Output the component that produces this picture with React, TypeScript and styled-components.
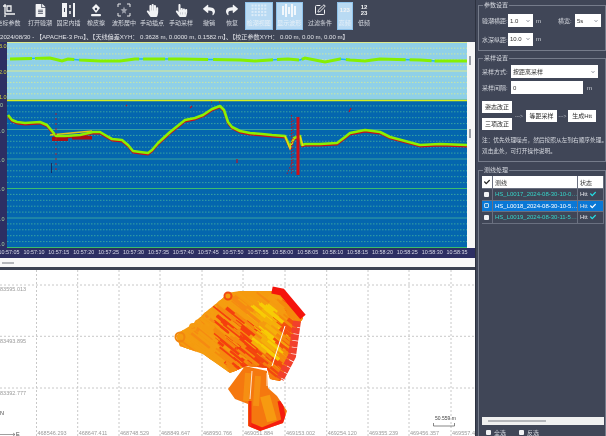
import React from "react";
import styled, { createGlobalStyle } from "styled-components";
import { FaFileAlt, FaHandPaper, FaHandPointer, FaReply, FaShare, FaCheck, FaChevronDown } from "react-icons/fa";
import { SquarePen } from "lucide-react";

const GlobalStyle = createGlobalStyle`
  html, body {
    margin: 0;
    padding: 0;
    width: 606px;
    height: 436px;
    overflow: hidden;
    background: #404657;
    font-family: "Liberation Sans", "Noto Sans CJK SC", sans-serif;
    font-size: 6px;
    color: #d5d8df;
  }
`;

// the reference is a scaled-down capture, everything in it is slightly soft
const Page = styled.div`
  display: flex;
  width: 606px;
  height: 436px;
  overflow: hidden;
  filter: blur(0.3px);
`;

const LeftColumn = styled.div`
  width: 476px;
  flex: none;
  display: flex;
  flex-direction: column;
  overflow: hidden;
  border-right: 1px solid #2d3240;
  box-sizing: border-box;
`;

const Toolbar = styled.div`
  height: 31px;
  flex: none;
  display: flex;
  padding-top: 2px;
  box-sizing: border-box;
`;

const Tool = styled.div<{ $w: number; $gap: number; $active?: boolean }>`
  width: ${(p) => p.$w}px;
  margin-left: ${(p) => p.$gap}px;
  height: 28px;
  flex: none;
  display: flex;
  flex-direction: column;
  align-items: center;
  box-sizing: border-box;
  gap: 2.5px;
  white-space: nowrap;
  line-height: 7px;
  background: ${(p) => (p.$active ? "#b9daf3" : "transparent")};
  border: 1px solid ${(p) => (p.$active ? "#8fc3ec" : "transparent")};
  color: ${(p) => (p.$active ? "#e6f0f8" : "#d5d8df")};
`;

const IconSlot = styled.div`
  height: 14px;
  display: flex;
  align-items: center;
  justify-content: center;
  color: #f2f3f5;
`;

const StackedDigits = styled.div`
  font-size: 6px;
  line-height: 6px;
  text-align: center;
  font-weight: 700;
`;

const InfoBar = styled.div`
  height: 11px;
  flex: none;
  line-height: 11px;
  font-size: 6.1px;
  white-space: nowrap;
  color: #dfe1e6;
`;

const ChartRow = styled.div`
  display: flex;
  height: 206px;
  flex: none;
`;

const PlotSvg = styled.svg`
  display: block;
  width: 467px;
  height: 206px;
  flex: none;
`;

const VScroll = styled.div`
  position: relative;
  flex: 1;
  background: #f7f7f7;
`;

const VThumb = styled.div<{ $top: number }>`
  position: absolute;
  left: 2px;
  top: ${(p) => p.$top}px;
  width: 2px;
  height: 9px;
  background: #9a9ea6;
`;

const TimeAxis = styled.div`
  height: 10px;
  flex: none;
  display: flex;
  background: #2d2f63;
  overflow: hidden;
`;

const TimeLabel = styled.span`
  width: 24.9px;
  flex: none;
  line-height: 9px;
  font-size: 5.4px;
  color: #d9dbe8;
  white-space: nowrap;
  display: flex;
  justify-content: center;
  &:first-child {
    margin-left: -3.4px;
  }
`;

const HScroll = styled.div`
  height: 9px;
  flex: none;
  display: flex;
  align-items: center;
  padding-left: 2px;
  background: #f8f8f8;
`;

const HThumb = styled.div<{ $w: number }>`
  width: ${(p) => p.$w}px;
  height: 2px;
  background: #b4b6ba;
`;

const Divider = styled.div`
  height: 3px;
  flex: none;
  background: #3c4252;
`;

const MapSvg = styled.svg`
  display: block;
  width: 476px;
  height: 167px;
  flex: none;
  background: #ffffff;
`;

const RightPanel = styled.div`
  flex: 1;
  display: flex;
  flex-direction: column;
  padding: 1px 0 0 2px;
  min-width: 0;
`;

const Group = styled.fieldset<{ $h: number; $gap?: number; $pad?: number }>`
  margin: ${(p) => p.$gap ?? 0}px 0 0;
  padding: ${(p) => p.$pad ?? 2}px 1px 0 3px;
  height: ${(p) => p.$h}px;
  flex: none;
  box-sizing: border-box;
  border: 1px solid #767c8b;
  min-width: 0;
  legend {
    padding: 0 1px;
    margin-left: 1px;
    font-size: 6px;
    line-height: 8px;
  }
`;

const FormRow = styled.div<{ $mt?: number }>`
  display: flex;
  align-items: center;
  margin-top: ${(p) => p.$mt ?? 0}px;
  white-space: nowrap;
`;

const FieldLabel = styled.span<{ $w?: number; $ml?: number }>`
  width: ${(p) => (p.$w ? `${p.$w}px` : "auto")};
  margin-left: ${(p) => p.$ml ?? 0}px;
  flex: none;
`;

const SelectBox = styled.div<{ $w: number; $h: number }>`
  width: ${(p) => p.$w}px;
  height: ${(p) => p.$h}px;
  flex: none;
  box-sizing: border-box;
  background: #ffffff;
  color: #333;
  display: flex;
  align-items: center;
  justify-content: space-between;
  padding: 0 3px 0 2px;
  svg {
    color: #8a8f9a;
  }
`;

const ActionRow = styled.div`
  display: flex;
  align-items: center;
  margin-top: 7px;
`;

const ButtonStack = styled.div`
  display: flex;
  flex-direction: column;
  gap: 5px;
`;

const ActionButton = styled.div<{ $w: number }>`
  width: ${(p) => p.$w}px;
  height: 12px;
  box-sizing: border-box;
  flex: none;
  background: #ffffff;
  color: #2b2b2b;
  text-align: center;
  line-height: 12px;
  font-size: 6px;
`;

const Arrow = styled.span<{ $w: number }>`
  width: ${(p) => p.$w}px;
  flex: none;
  text-align: center;
  font-size: 5px;
  color: #b6bac4;
`;

const Note = styled.div`
  margin-top: 5px;
  line-height: 11px;
  font-size: 5.7px;
  white-space: nowrap;
`;

const LineBody = styled.div`
  height: 263px;
  display: flex;
  flex-direction: column;
`;

const LineTable = styled.div`
  display: flex;
  flex-direction: column;
`;

const TableRow = styled.div<{ $variant?: "head" | "selected" }>`
  display: grid;
  grid-template-columns: 11px 85px 1fr;
  height: ${(p) => (p.$variant === "head" ? 13 : 11.5)}px;
  align-items: center;
  background: ${(p) =>
    p.$variant === "head" ? "#ffffff" : p.$variant === "selected" ? "#0a78d6" : "transparent"};
  color: ${(p) => (p.$variant === "head" ? "#333" : "#e4e6ea")};
  border-bottom: 1px solid #6a7080;
  box-sizing: border-box;
  & > * {
    height: 100%;
    display: flex;
    align-items: center;
    box-sizing: border-box;
    border-right: 1px solid #6a7080;
    padding-left: 2px;
    white-space: nowrap;
    overflow: hidden;
  }
`;

const LineName = styled.div<{ $selected?: boolean }>`
  color: ${(p) => (p.$selected ? "#ffffff" : "#35d4c8")};
  font-size: 6px;
`;

const StatusCell = styled.div<{ $selected?: boolean }>`
  gap: 2px;
  svg {
    color: ${(p) => (p.$selected ? "#ffffff" : "#24e0e6")};
  }
`;

const Box = styled.span<{ $tick?: boolean }>`
  width: 5px;
  height: 5px;
  flex: none;
  background: ${(p) => (p.$tick ? "#1a7fd0" : "#f2f3f5")};
  border: ${(p) => (p.$tick ? "1px solid #bcd9f0" : "none")};
  box-sizing: border-box;
  border-radius: 1px;
`;

const TableSpace = styled.div`
  flex: 1;
`;

const PanelScroll = styled.div`
  height: 8px;
  flex: none;
  display: flex;
  align-items: center;
  padding-left: 6px;
  background: #f0f0f0;
`;

const FooterRow = styled.div`
  height: 14px;
  flex: none;
  display: flex;
  align-items: center;
  gap: 13px;
  padding-left: 4px;
`;

const CheckLabel = styled.label`
  display: flex;
  align-items: center;
  gap: 3px;
`;

const CoordIcon = () => (
  <svg width="14" height="14" viewBox="0 0 14 14" fill="none" stroke="#f2f3f5" strokeWidth="1.3">
    <path d="M3 1v10h10M5 3h4v5H5zM1 3h3M3 12v2" />
  </svg>
);

const ColumnsIcon = () => (
  <svg width="13" height="14" viewBox="0 0 13 14">
    <rect x="0" y="0" width="5" height="14" fill="#f2f3f5" />
    <rect x="11" y="0" width="2" height="14" fill="#f2f3f5" />
    <path d="M8 2v3M8 8v3" stroke="#f2f3f5" strokeWidth="1.5" />
    <path d="M2 5h1v4H2z" fill="#404657" />
  </svg>
);

const InkIcon = () => (
  <svg width="14" height="14" viewBox="0 0 14 14" fill="#f2f3f5">
    <path d="M7 1l4 4-4 5-4-5z" />
    <rect x="2" y="11" width="10" height="2.2" rx="1" />
    <circle cx="7" cy="6" r="1.2" fill="#404657" />
  </svg>
);

const CenterIcon = () => (
  <svg width="14" height="14" viewBox="0 0 14 14" fill="none" stroke="#e8e9ec" strokeWidth="1">
    <path d="M1 4V1h3M10 1h3v3M13 10v3h-3M4 13H1v-3" />
    <path d="M7 3.5l1 2.5 2.5.5-2 1.7.6 2.6L7 9.5l-2.1 1.3.6-2.6-2-1.7 2.5-.5z" fill="#9da1ac" stroke="none" />
  </svg>
);

const GridDotsIcon = () => (
  <svg width="16" height="13" viewBox="0 0 16 13" fill="#dcecf8">
    {[0, 1, 2, 3].map((r) =>
      [0, 1, 2, 3, 4].map((c) => <rect key={`${r}-${c}`} x={c * 3.2 + 0.5} y={r * 3.2 + 0.5} width="2" height="2" />)
    )}
  </svg>
);

const WaveIcon = () => (
  <svg width="16" height="13" viewBox="0 0 16 13" fill="#f2f7fc">
    <rect x="1" y="2" width="2" height="9" />
    <rect x="4" y="0" width="2" height="13" />
    <rect x="7" y="3" width="2" height="7" />
    <rect x="10" y="0" width="2" height="13" />
    <rect x="13" y="2" width="2" height="9" />
  </svg>
);

const times = [
  "10:57:05", "10:57:10", "10:57:15", "10:57:20", "10:57:25", "10:57:30", "10:57:35",
  "10:57:40", "10:57:45", "10:57:50", "10:57:55", "10:58:00", "10:58:05", "10:58:10",
  "10:58:15", "10:58:20", "10:58:25", "10:58:30", "10:58:35",
];

const lowerCurve =
  "M8 115L12 120L17 122L25 123L40 122L47 125L52 131L56 136L65 136L80 135L93 132L100 132L105 135L112 139L122 140L128 145L133 151L140 152L148 153L152 150L158 143L170 132L185 120L195 118L203 115L212 109L220 106L224 110L228 122L232 127L240 131L250 133L262 134L272 135L285 136L290 147L294 138L300 136L302 145L305 144L320 144L337 143L345 137L350 133L365 130L380 132L390 137L405 141L420 145L440 144L467 145";
const upperCurve =
  "M10 59L50 58L62 61L68 59L80 60L100 61L120 61L135 59L150 59L180 59L240 60L255 61L270 60L288 59L300 60L305 58L315 60L325 62L340 59L350 60L365 61L380 59L420 60L435 61L467 61";

const rows = (from: number, to: number, step: number) => {
  const out: number[] = [];
  for (let y = from; y < to - 1; y += step) out.push(y);
  return out;
};

const Plot = () => (
  <PlotSvg viewBox="0 42 467 206">
    <rect x="7" y="42" width="460" height="58" fill="#8fd0e8" />
    <rect x="7" y="100" width="460" height="148" fill="#0466ae" />
    <rect x="0" y="42" width="7" height="206" fill="#2d2f63" />
    {rows(42.5, 100, 5.7).map((y, i) => (
      <line
        key={y}
        x1="7"
        x2="467"
        y1={y}
        y2={y}
        stroke={i % 5 === 0 ? "#dbe98e" : "#c9e6a4"}
        strokeDasharray={i % 5 === 0 ? undefined : "1.5 1.5"}
      />
    ))}
    {rows(100, 248, 5.9).map((y, i) => (
      <line
        key={y}
        x1="7"
        x2="467"
        y1={y}
        y2={y}
        stroke={i === 15 ? "#3bbd6c" : "#38a3a0"}
        strokeDasharray={i % 5 === 0 ? undefined : "1.5 1.5"}
      />
    ))}
    <line x1="7" x2="467" y1="100.5" y2="100.5" stroke="#d8f020" strokeWidth="1.6" />
    <line x1="7" x2="467" y1="247.5" y2="247.5" stroke="#3bbd6c" />
    <path d={upperCurve} fill="none" stroke="#1fb6ef" strokeWidth="1.4" />
    <path d={upperCurve} fill="none" stroke="#86f000" strokeWidth="3" strokeDasharray="22 3 40 5 60 4" />
    <path d={lowerCurve} transform="translate(0 1.4)" fill="none" stroke="#c8101c" strokeWidth="2" strokeLinejoin="round" />
    <rect x="52" y="137" width="16" height="4" fill="#a80f18" />
    <rect x="72" y="136" width="20" height="3.5" fill="#a80f18" />
    <path d="M50 135L92 131" stroke="#e6c418" strokeWidth="1.6" />
    <path d={lowerCurve} fill="none" stroke="#8cf000" strokeWidth="2.6" strokeLinejoin="round" />
    <path d="M285 136L290 149L294 138M300 136L303 146" fill="none" stroke="#f0d020" strokeWidth="1.2" />
    <path d="M56 113V172" stroke="#a82030" strokeDasharray="2 3" />
    <path d="M51.5 163V173" stroke="#182a60" />
    <rect x="296.5" y="117" width="3" height="58" fill="#d01018" />
    <path d="M291.5 115V175M293 120V172M287 174L293 160" stroke="#b01828" strokeDasharray="1.5 1.5" />
    <path d="M349 112L351 108M190 108L192 106M126 106L127 105M211 102h1M219 102h1M237 159v4" stroke="#c01020" strokeWidth="1.2" />
    <g fontSize="5.5" fontFamily="Liberation Sans" fill="#d2d63c">
      <text x="-1" y="48">3.0</text>
      <text x="-1" y="74">2.0</text>
      <text x="-1" y="99">1.0</text>
    </g>
    <g fontSize="5.5" fontFamily="Liberation Sans" fill="#a8d6a0">
      <text x="0" y="107">0</text>
      <text x="0" y="133">.0</text>
      <text x="0" y="162">.0</text>
      <text x="0" y="191">.0</text>
      <text x="0" y="221">.0</text>
      <text x="0" y="246">.0</text>
    </g>
  </PlotSvg>
);

const gridX = [36.5, 77.7, 119, 160, 202, 243, 285, 326.7, 368, 409, 451];
const eastings = [
  "468546.293", "468647.411", "468748.529", "468849.647", "468950.766", "469051.884",
  "469153.002", "469254.120", "469355.239", "469456.357", "469557.475",
];

const upperBlob =
  "176,335 180,331 193,323 207,310 223,297 227,292 240,290 277,290 303,317 293,333 290,357 280,380 270,378 267,367 247,365 230,372 203,353 180,345";
const lowerBlob =
  "228,388 245,365 267,370 268,387 277,395 287,410 283,422 260,430 248,425 248,403 235,398";

// survey passes, short diagonal strokes coloured by where they fall in the area
const passColour = (x: number, y: number, r: number) => {
  if (x > 247 && x < 272 && y < 345 && y > 300) return r < 0.5 ? "#f7cc05" : "#f5b00a";
  if (x >= 272) return r < 0.5 ? "#f58a0c" : "#f4500e";
  if (x > 212 && x <= 247 && y - (x - 212) * 0.6 > 298 && y < 370) return r < 0.55 ? "#f5400e" : "#f58a0e";
  if (y > 345 && x > 235) return r < 0.6 ? "#f2480f" : "#f57c0e";
  return r < 0.85 ? "#f59d10" : "#f68a12";
};

const passes = (() => {
  let seed = 7;
  const rnd = () => {
    seed = (seed * 16807) % 2147483647;
    return seed / 2147483647;
  };
  return Array.from({ length: 420 }, () => {
    const x = 176 + rnd() * 128;
    const y = 288 + rnd() * 92;
    const len = 6 + rnd() * 16;
    return { x, y, len, w: 1.5 + rnd() * 2.5, c: passColour(x, y, rnd()) };
  });
})();

const SurveyMap = () => (
  <MapSvg viewBox="0 269 476 167">
    {gridX.map((x) => (
      <line key={x} x1={x} x2={x} y1="269" y2="436" stroke="#c8c8c8" strokeDasharray="2 2" />
    ))}
    {[284, 335.3, 387].map((y) => (
      <line key={y} x1="0" x2="476" y1={y} y2={y} stroke="#c8c8c8" strokeDasharray="2 2" />
    ))}
    <clipPath id="upper">
      <polygon points={upperBlob} />
    </clipPath>
    <polygon points={upperBlob} fill="#f59b0f" />
    <g clipPath="url(#upper)" fill="none">
      {passes.map((s, i) => (
        <line key={i} x1={s.x} y1={s.y} x2={s.x + s.len} y2={s.y + s.len * 0.8} stroke={s.c} strokeWidth={s.w} />
      ))}
    </g>
    <g fill="none" stroke="#f59b12" strokeWidth="2">
      <circle cx="180" cy="336" r="4.5" stroke="#f2860f" />
      <circle cx="193" cy="326" r="3" />
      <circle cx="198" cy="322" r="2.5" />
      <circle cx="207" cy="315" r="3" />
      <circle cx="228" cy="295" r="3.5" stroke="#f24a10" />
    </g>
    <path d="M272 289L282 291L303 316" fill="none" stroke="#f5140c" strokeWidth="7" />
    <path d="M297 320L292 355L280 378" fill="none" stroke="#f2402c" strokeWidth="8" strokeDasharray="6 .7" />
    <path d="M285 325L272 365" fill="none" stroke="#ffffff" strokeWidth="1" />
    <clipPath id="lower">
      <polygon points={lowerBlob} />
    </clipPath>
    <polygon points={lowerBlob} fill="#f5780f" />
    <g clipPath="url(#lower)" fill="none">
      <path d="M248 372L246 400M258 375L256 405" stroke="#f68f12" strokeWidth="6" />
      <path d="M265 395L272 420" stroke="#f79a10" strokeWidth="10" />
      <path d="M280 400L284 420L262 429L250 424" stroke="#f51c0e" strokeWidth="5" />
      <path d="M250 400V425" stroke="#f4300f" strokeWidth="3" />
    </g>
    <path d="M267 372V385M252 370L250 398" stroke="#ffffff" strokeWidth=".8" />
    <g fontSize="5.5" fontFamily="Liberation Sans" fill="#9a9a9a">
      {eastings.map((t, i) => (
        <text key={t} x={gridX[i] + 1} y="434">{t}</text>
      ))}
      <text x="-3" y="290">483595.013</text>
      <text x="-3" y="342">483493.895</text>
      <text x="-3" y="394">483392.777</text>
    </g>
    <g fontFamily="Liberation Sans" fontSize="5.5" fill="#444">
      <text x="0" y="414">N</text>
      <text x="16" y="435">E</text>
      <path d="M0 433.5H15M13 432l2 1.5-2 1.5" fill="none" stroke="#777" strokeWidth=".7" />
      <text x="435" y="419" fontSize="5">50.559 m</text>
      <path d="M433.5 422v3h21v-3" fill="none" stroke="#555" strokeWidth=".7" />
    </g>
  </MapSvg>
);

const toolDefs: { label: string; w: number; gap: number; icon: React.ReactNode; active?: boolean }[] = [
  { label: "坐标参数", w: 26, gap: -4.5, icon: <CoordIcon /> },
  { label: "打开验潮", w: 26, gap: 5.5, icon: <FaFileAlt size={13} /> },
  { label: "固定内插", w: 26, gap: 2.5, icon: <ColumnsIcon /> },
  { label: "橡皮擦", w: 26, gap: 1.5, icon: <InkIcon /> },
  { label: "波形居中", w: 26, gap: 2, icon: <CenterIcon /> },
  { label: "手动插点", w: 26, gap: 2, icon: <FaHandPaper size={13} /> },
  { label: "手动采样", w: 26, gap: 3, icon: <FaHandPointer size={13} /> },
  { label: "撤销", w: 16, gap: 7, icon: <FaReply size={12} /> },
  { label: "恢复", w: 16, gap: 7, icon: <FaShare size={12} /> },
  { label: "检潮视图", w: 28, gap: 4.7, icon: <GridDotsIcon />, active: true },
  { label: "显示波形", w: 27.3, gap: 3, icon: <WaveIcon />, active: true },
  { label: "过滤条件", w: 24, gap: 5, icon: <SquarePen size={12} color="#f2f3f5" /> },
  { label: "高频", w: 16.3, gap: 4.7, icon: <StackedDigits>123</StackedDigits>, active: true },
  { label: "低频", w: 12, gap: 5, icon: <StackedDigits>12<br />23</StackedDigits> },
];

const lines = [
  { name: "HS_L0017_2024-08-30-10-0…" },
  { name: "HS_L0018_2024-08-30-10-5…", selected: true },
  { name: "HS_L0019_2024-08-30-11-5…" },
];

export default function App() {
  return (
    <Page>
      <GlobalStyle />
      <LeftColumn>
        <Toolbar>
          {toolDefs.map((t) => (
            <Tool key={t.label} $w={t.w} $gap={t.gap} $active={t.active}>
              <IconSlot>{t.icon}</IconSlot>
              <span>{t.label}</span>
            </Tool>
          ))}
        </Toolbar>
        <InfoBar>
          2024/08/30 - 【APACHE-3 Pro】、【天线偏差XYH： 0.3628 m, 0.0000 m, 0.1582 m】、【校正参数XYH： 0.00 m, 0.00 m, 0.00 m】
        </InfoBar>
        <ChartRow>
          <Plot />
          <VScroll>
            <VThumb $top={14} />
            <VThumb $top={87} />
          </VScroll>
        </ChartRow>
        <TimeAxis>
          {times.map((t) => (
            <TimeLabel key={t}>{t}</TimeLabel>
          ))}
        </TimeAxis>
        <HScroll>
          <HThumb $w={12} />
        </HScroll>
        <Divider />
        <SurveyMap />
      </LeftColumn>
      <RightPanel>
        <Group $h={50} $pad={5}>
          <legend>参数设置</legend>
          <FormRow>
            <FieldLabel $w={26}>验潮横距:</FieldLabel>
            <SelectBox $w={25} $h={13}>1.0<FaChevronDown size={4} /></SelectBox>
            <FieldLabel $ml={3}>m</FieldLabel>
            <FieldLabel $ml={17} $w={17}>横宽:</FieldLabel>
            <SelectBox $w={26} $h={13}>5s<FaChevronDown size={4} /></SelectBox>
          </FormRow>
          <FormRow $mt={5.5}>
            <FieldLabel $w={26}>水深纵距:</FieldLabel>
            <SelectBox $w={25} $h={13}>10.0<FaChevronDown size={4} /></SelectBox>
            <FieldLabel $ml={3}>m</FieldLabel>
          </FormRow>
        </Group>
        <Group $h={108} $gap={3} $pad={3}>
          <legend>采样设置</legend>
          <FormRow>
            <FieldLabel $w={29}>采样方式:</FieldLabel>
            <SelectBox $w={87} $h={13}>按距离采样<FaChevronDown size={4} /></SelectBox>
          </FormRow>
          <FormRow $mt={3}>
            <FieldLabel $w={29}>采样间隔:</FieldLabel>
            <SelectBox $w={72} $h={13}>0</SelectBox>
            <FieldLabel $ml={4}>m</FieldLabel>
          </FormRow>
          <ActionRow>
            <ButtonStack>
              <ActionButton $w={30}>姿态改正</ActionButton>
              <ActionButton $w={30}>三项改正</ActionButton>
            </ButtonStack>
            <Arrow $w={14}>---&gt;</Arrow>
            <ActionButton $w={31}>等距采样</ActionButton>
            <Arrow $w={11}>---&gt;</Arrow>
            <ActionButton $w={28}>生成Htt</ActionButton>
          </ActionRow>
          <Note>
            注：优先处理噪点，然后按照从左到右顺序处理。
            <br />
            双击此处，可打开操作说明。
          </Note>
        </Group>
        <Group $h={275} $gap={4}>
          <legend>测线处理</legend>
          <LineBody>
            <LineTable>
              <TableRow $variant="head">
                <div><FaCheck size={6} color="#222" /></div>
                <div>测线</div>
                <div>状态</div>
              </TableRow>
              {lines.map((l) => (
                <TableRow key={l.name} $variant={l.selected ? "selected" : undefined}>
                  <div><Box $tick={l.selected} /></div>
                  <LineName $selected={l.selected}>{l.name}</LineName>
                  <StatusCell $selected={l.selected}>Htt<FaCheck size={6} /></StatusCell>
                </TableRow>
              ))}
            </LineTable>
            <TableSpace />
            <PanelScroll>
              <HThumb $w={58} />
            </PanelScroll>
            <FooterRow>
              <CheckLabel><Box />全选</CheckLabel>
              <CheckLabel><Box />反选</CheckLabel>
            </FooterRow>
          </LineBody>
        </Group>
      </RightPanel>
    </Page>
  );
}
